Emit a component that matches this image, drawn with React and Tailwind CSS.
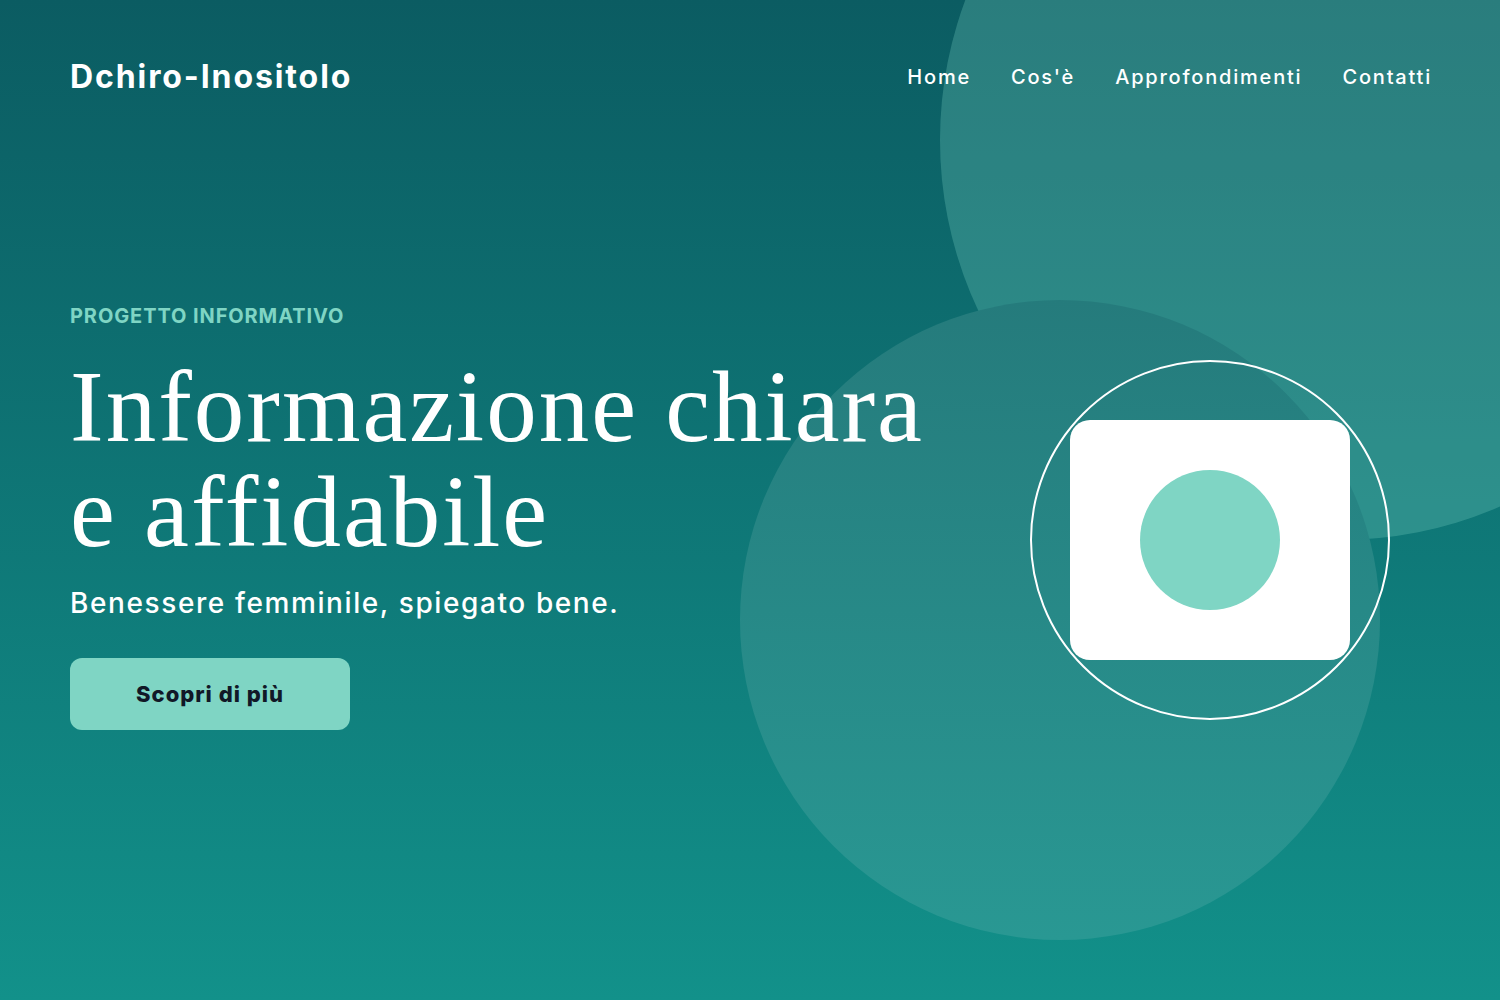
export default function App() {
  const sans = { fontFamily: "Inter, 'Open Sans', sans-serif" };
  return (
    <div
      className="relative w-full h-[1000px] overflow-hidden bg-gradient-to-b from-[#0b5c62] to-[#12918a] text-white"
      style={sans}
    >
      {/* decorative background discs */}
      <div className="absolute left-[940px] top-[-260px] w-[800px] h-[800px] rounded-full bg-[#7fd5c4]/[0.28]" />
      <div className="absolute left-[740px] top-[300px] w-[640px] h-[640px] rounded-full bg-gradient-to-b from-[#257b7c] to-[#299893]" />

      <div className="relative">
        <header className="flex h-[154px] items-center justify-between pl-[70px] pr-[68px]">
          <div className="text-[32px] font-bold tracking-[1.9px]">Dchiro-Inositolo</div>
          <nav className="flex items-center gap-[40px] text-[20px] font-medium tracking-[1.8px]">
            <a>Home</a>
            <a>Cos'è</a>
            <a>Approfondimenti</a>
            <a>Contatti</a>
          </nav>
        </header>

        <main className="flex justify-between pl-[70px] pr-[110px]">
          <section className="pt-[148px]">
            <p className="text-[20px] leading-[28px] font-bold uppercase tracking-[0.9px] text-[#7fd5c4]">
              Progetto informativo
            </p>
            <h1
              className="mt-[25px] text-[101px] leading-[105px] font-normal tracking-[2px]"
              style={{ fontFamily: "'Liberation Serif', 'DejaVu Serif', serif" }}
            >
              Informazione chiara
              <br />
              e affidabile
            </h1>
            <p className="mt-[18px] text-[28px] leading-[40px] font-medium tracking-[1.6px]">
              Benessere femminile, spiegato bene.
            </p>
            <button className="mt-[35px] flex h-[72px] w-[280px] items-center justify-center rounded-[12px] bg-[#7fd5c4] text-[22px] font-extrabold tracking-[1px] text-[#111827]">
              Scopri di più
            </button>
          </section>

          <div className="pt-[206px]">
            <div className="flex h-[360px] w-[360px] items-center justify-center rounded-full border-2 border-white">
              <div className="flex h-[240px] w-[280px] items-center justify-center rounded-[20px] bg-white">
                <div className="h-[140px] w-[140px] rounded-full bg-[#7fd5c4]" />
              </div>
            </div>
          </div>
        </main>
      </div>
    </div>
  );
}
